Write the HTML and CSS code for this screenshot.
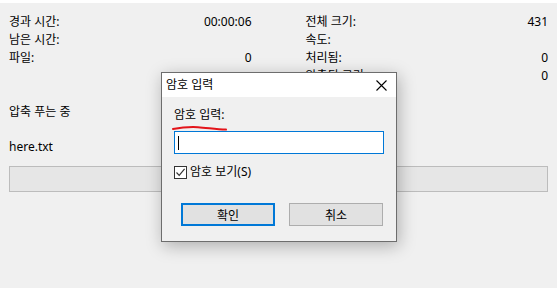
FILE: index.html
```html
<!DOCTYPE html>
<html lang="ko">
<head>
    <meta charset="UTF-8">
    <title>압축 푸는 중</title>
    <link rel="stylesheet" href="styles.css">
</head>
<body>
    <div class="topline"></div>
    <div class="main">
        <div class="stats">
            <div class="col">
                <div class="row"><span>경과 시간:</span><span>00:00:06</span></div>
                <div class="row"><span>남은 시간:</span><span></span></div>
                <div class="row"><span>파일:</span><span>0</span></div>
            </div>
            <div class="col">
                <div class="row"><span>전체 크기:</span><span>431</span></div>
                <div class="row"><span>속도:</span><span></span></div>
                <div class="row"><span>처리됨:</span><span>0</span></div>
                <div class="row"><span>압축된 크기:</span><span>0</span></div>
            </div>
        </div>
        <div class="status">압축 푸는 중</div>
        <div class="filename">here.txt</div>
        <div class="progress"></div>
    </div>

    <div class="dialog">
        <div class="titlebar">
            <span class="title">암호 입력</span>
            <svg class="close" width="11" height="11" viewBox="0 0 11 11">
                <path d="M0.5 0.5 L10.5 10.5 M10.5 0.5 L0.5 10.5" stroke="#000" stroke-width="1.1" fill="none"/>
            </svg>
        </div>
        <div class="dialog-body">
            <div class="label">암호 입력:</div>
            <div class="password"><span class="caret"></span></div>
            <label class="check">
                <span class="box">
                    <svg width="11" height="11" viewBox="0 0 11 11">
                        <path d="M1.5 5.5 L4.2 8.3 L9.6 1.8" stroke="#333" stroke-width="1.2" fill="none"/>
                    </svg>
                </span>
                암호 보기(S)
            </label>
            <div class="buttons">
                <button class="btn btn-default">확인</button>
                <button class="btn">취소</button>
            </div>
        </div>
        <!-- red marker stroke under the label -->
        <svg class="squiggle" width="56" height="8" viewBox="0 0 56 8">
            <path d="M1 5 C9 3.5 18 2.8 26 3.2 C35 3.8 44 5.2 54 5.6" stroke="#e3141a" stroke-width="2" fill="none" stroke-linecap="round"/>
        </svg>
    </div>
</body>
</html>
```

FILE: styles.css
```css
body {
    margin: 0;
    width: 557px;
    height: 288px;
    background-color: #f0f0f0;
    font-family: "Noto Sans", "Noto Sans CJK KR", sans-serif;
    font-size: 12px;
    color: #000;
    position: relative;
    overflow: hidden;
}
.topline {
    height: 3px;
    background-color: #fff;
}
.main {
    padding: 10px 9px 0 9px;
}
.stats {
    display: flex;
    gap: 54px;
}
.col {
    flex: 1;
    display: flex;
    flex-direction: column;
}
.row {
    display: flex;
    justify-content: space-between;
    height: 18px;
    line-height: 18px;
}
.status {
    margin-top: 18px;
    line-height: 18px;
}
.filename {
    margin-top: 17px;
    line-height: 18px;
}
.progress {
    margin-top: 10px;
    height: 24px;
    border: 1px solid #bcbcbc;
    background-color: #e6e6e6;
}
.dialog {
    position: absolute;
    left: 161px;
    top: 72px;
    width: 234px;
    height: 168px;
    border: 1px solid #6d6d6d;
    background-color: #f0f0f0;
    box-shadow: 2px 4px 16px rgba(0, 0, 0, 0.28);
}
.titlebar {
    height: 24px;
    background-color: #fff;
    display: flex;
    align-items: center;
    justify-content: space-between;
    padding: 0 9px 0 4px;
}
.title {
    line-height: 18px;
}
.dialog-body {
    padding: 9px 0 0 12px;
}
.label {
    line-height: 18px;
}
.password {
    margin-top: 7px;
    width: 208px;
    height: 21px;
    border: 1px solid #0078d7;
    background-color: #fff;
    display: flex;
    align-items: center;
}
.caret {
    margin-left: 3px;
    width: 1px;
    height: 14px;
    background-color: #000;
}
.check {
    margin-top: 11px;
    display: flex;
    align-items: center;
    gap: 3px;
    line-height: 14px;
}
.box {
    width: 11px;
    height: 11px;
    border: 1px solid #333;
    background-color: #fff;
    display: flex;
}
.buttons {
    margin-top: 24px;
    padding-left: 7px;
    display: flex;
    gap: 14px;
}
.btn {
    width: 94px;
    height: 23px;
    border: 1px solid #adadad;
    background-color: #e1e1e1;
    font-family: inherit;
    font-size: 12px;
    color: #000;
    padding: 0;
}
.btn-default {
    border: 2px solid #0078d7;
}
.squiggle {
    position: absolute;
    left: 10px;
    top: 51px;
}
```
